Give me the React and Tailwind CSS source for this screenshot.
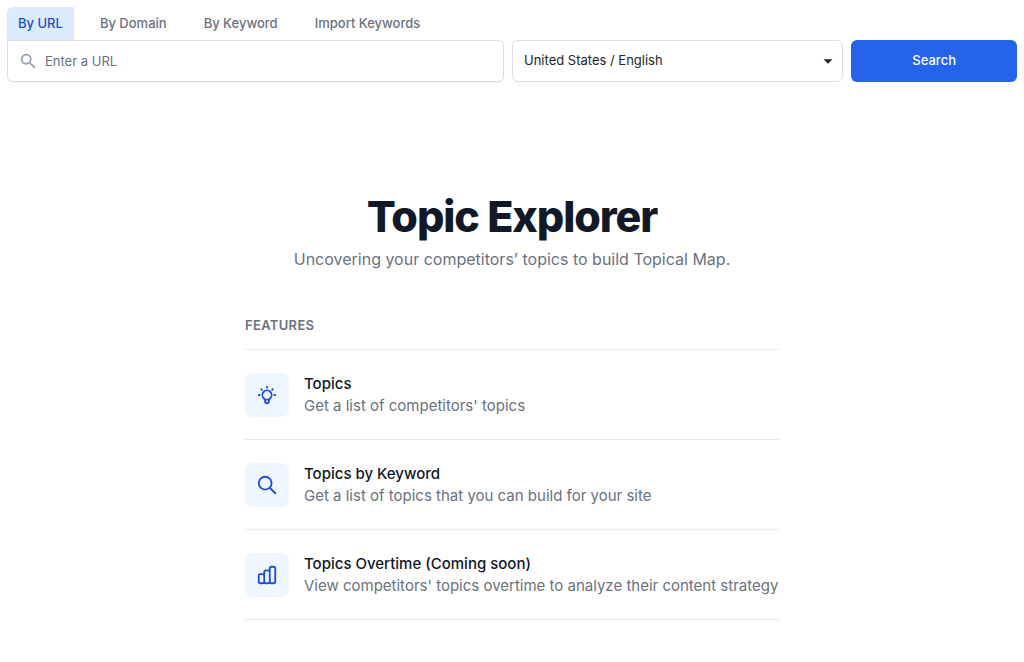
import React from 'react';

const tabs = ['By URL', 'By Domain', 'By Keyword', 'Import Keywords'];

const features = [
  {
    title: 'Topics',
    description: "Get a list of competitors' topics",
    path: 'M9.663 17h4.673M12 3v1m6.364 1.636l-.707.707M21 12h-1M4 12H3m3.343-5.657l-.707-.707m2.828 9.9a5 5 0 117.072 0l-.548.547A3.374 3.374 0 0014 18.469V19a2 2 0 11-4 0v-.531c0-.895-.356-1.754-.988-2.386l-.548-.547z',
  },
  {
    title: 'Topics by Keyword',
    description: 'Get a list of topics that you can build for your site',
    path: 'M21 21l-6-6m2-5a7 7 0 11-14 0 7 7 0 0114 0z',
  },
  {
    title: 'Topics Overtime (Coming soon)',
    description: "View competitors' topics overtime to analyze their content strategy",
    path: 'M9 19v-6a2 2 0 00-2-2H5a2 2 0 00-2 2v6a2 2 0 002 2h2a2 2 0 002-2zm0 0V9a2 2 0 012-2h2a2 2 0 012 2v10m-6 0a2 2 0 002 2h2a2 2 0 002-2m0 0V5a2 2 0 012-2h2a2 2 0 012 2v14a2 2 0 01-2 2h-2a2 2 0 01-2-2z',
  },
];

const SearchBar = () => (
  <form className="flex items-start gap-2" onSubmit={(e) => e.preventDefault()}>
    <div className="relative flex-[3]">
      <svg
        className="pointer-events-none absolute left-3 top-3 h-[18px] w-[18px] text-[#9ca3af]"
        viewBox="0 0 20 20"
        fill="currentColor"
        aria-hidden="true"
      >
        <path
          fillRule="evenodd"
          clipRule="evenodd"
          d="M8 4a4 4 0 100 8 4 4 0 000-8zM2 8a6 6 0 1110.89 3.476l4.817 4.817a1 1 0 01-1.414 1.414l-4.816-4.816A6 6 0 012 8z"
        />
      </svg>
      <input
        type="text"
        aria-label="URL"
        placeholder="Enter a URL"
        className="block h-[42px] w-full rounded-md rounded-tl-none border border-[#d9dce1] bg-white pl-[37px] pr-3 text-[13px] text-gray-900 shadow-xs placeholder:text-[#6b7280]"
      />
    </div>
    <div className="relative flex-[2]">
      <select
        aria-label="Location and language"
        className="block h-[42px] w-full appearance-none rounded-md border border-[#d9dce1] bg-white pl-[11px] pr-8 text-[13px] text-[#212529]"
      >
        <option>United States / English</option>
      </select>
      <svg
        className="pointer-events-none absolute right-1.5 top-3 h-[18px] w-[18px] text-[#212529]"
        viewBox="0 0 24 24"
        fill="currentColor"
        aria-hidden="true"
      >
        <path d="M6 9.5h12l-6 6z" />
      </svg>
    </div>
    <button
      type="submit"
      className="h-[42px] flex-1 rounded-md bg-[#2563eb] text-[13px] font-medium text-white"
    >
      Search
    </button>
  </form>
);

const Feature = ({ title, description, path }) => (
  <li className="flex gap-[15px] border-b border-[#e9eaed] pt-[23px] pb-[22px]">
    <span className="flex h-11 w-11 shrink-0 items-center justify-center rounded-lg bg-[#eff6ff]">
      <svg
        className="h-[22px] w-[22px] text-[#1d4ed8]"
        viewBox="0 0 24 24"
        fill="none"
        stroke="currentColor"
        strokeWidth="2"
        strokeLinecap="round"
        strokeLinejoin="round"
        aria-hidden="true"
      >
        <path d={path} />
      </svg>
    </span>
    <div className="sm:whitespace-nowrap">
      <h3 className="text-[15px] leading-[22px] font-medium text-[#111827]">{title}</h3>
      <p className="text-[15px] leading-[22px] text-[#6b7280]">{description}</p>
    </div>
  </li>
);

const App = () => {
  return (
    <div className="bg-white px-[7px] pt-[7px] font-['Inter',sans-serif]">
      <nav className="flex gap-[15px]" aria-label="Search type">
        {tabs.map((tab, index) => (
          <button
            key={tab}
            type="button"
            className={`h-[33px] px-[11px] text-[13px] font-medium ${
              index === 0 ? 'rounded-tl-md bg-[#dbeafe] text-[#1d4ed8]' : 'text-[#6b7280]'
            }`}
          >
            {tab}
          </button>
        ))}
      </nav>
      <SearchBar />

      <main className="mx-auto max-w-[534px] pt-[112px]">
        <div className="text-center">
          <h1 className="text-[43px] leading-[45px] font-extrabold tracking-tight text-[#111827]">
            Topic Explorer
          </h1>
          <p className="mt-2 text-[16px] leading-6 text-[#6b7280]">
            Uncovering your competitors’ topics to build Topical Map.
          </p>
        </div>
        <section className="mt-11">
          <h2 className="text-[13px] leading-5 font-semibold tracking-wide text-[#6b7280] uppercase">
            Features
          </h2>
          <ul className="mt-[14px] border-t border-[#e9eaed]">
            {features.map((feature) => (
              <Feature key={feature.title} {...feature} />
            ))}
          </ul>
        </section>
      </main>
    </div>
  );
};

export default App;
